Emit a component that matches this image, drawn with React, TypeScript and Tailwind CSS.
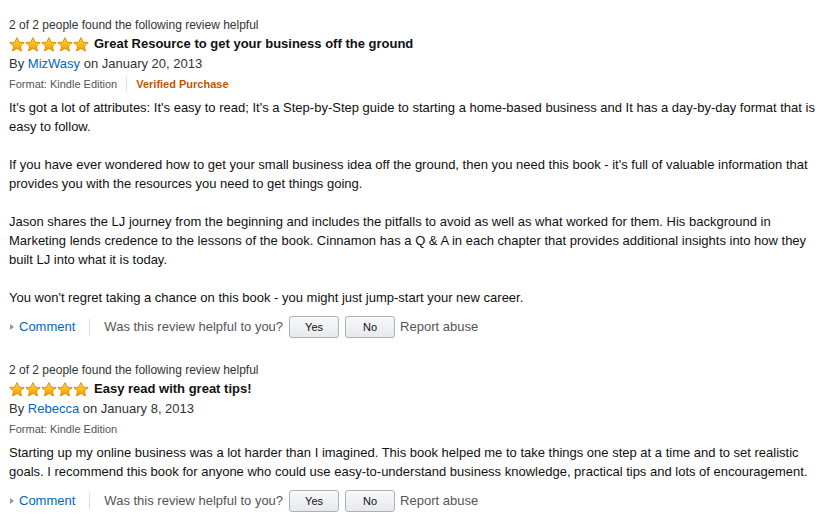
import React from "react";

const Star = () => (
  <svg width="16" height="15" viewBox="0 0 16 15" className="block">
    <defs>
      <linearGradient id="sg" x1="0" y1="0" x2="0" y2="1">
        <stop offset="0" stopColor="#ffd75a" />
        <stop offset="0.55" stopColor="#ffb51a" />
        <stop offset="1" stopColor="#f59b00" />
      </linearGradient>
    </defs>
    <path
      d="M8 0.6 L10.2 5.1 L15.2 5.6 L11.4 9 L12.5 14 L8 11.5 L3.5 14 L4.6 9 L0.8 5.6 L5.8 5.1 Z"
      fill="url(#sg)"
      stroke="#d98a00"
      strokeWidth="0.9"
      strokeLinejoin="round"
    />
  </svg>
);

const Stars = () => (
  <div className="flex">
    {[0, 1, 2, 3, 4].map((i) => (
      <Star key={i} />
    ))}
  </div>
);

const Btn = ({ label }: { label: string }) => (
  <button className="h-[22px] w-[50px] rounded-[3px] border border-[#adb1b8] bg-gradient-to-b from-[#f7f8fa] to-[#e7e9ec] text-[11px] leading-[20px] text-[#111] shadow-[0_1px_0_rgba(255,255,255,0.6)_inset]">
    {label}
  </button>
);

const Actions = () => (
  <div className="flex h-[22px] items-center text-[13px] text-[#555]">
    <span className="ml-[1px] mr-[5px] inline-block h-0 w-0 border-y-[3.5px] border-l-[4px] border-y-transparent border-l-[#999]" />
    <span className="text-[#0066c0]">Comment</span>
    <span className="mx-[14px] h-[16px] w-px bg-[#ddd]" />
    <span>Was this review helpful to you?</span>
    <span className="ml-[6px]"><Btn label="Yes" /></span>
    <span className="ml-[6px]"><Btn label="No" /></span>
    <span className="ml-[5px]">Report abuse</span>
  </div>
);

type Review = {
  title: string;
  author: string;
  date: string;
  verified: boolean;
  paragraphs: string[];
};

const reviews: Review[] = [
  {
    title: "Great Resource to get your business off the ground",
    author: "MizWasy",
    date: "January 20, 2013",
    verified: true,
    paragraphs: [
      "It's got a lot of attributes: It's easy to read; It's a Step-by-Step guide to starting a home-based business and It has a day-by-day format that is easy to follow.",
      "If you have ever wondered how to get your small business idea off the ground, then you need this book - it's full of valuable information that provides you with the resources you need to get things going.",
      "Jason shares the LJ journey from the beginning and includes the pitfalls to avoid as well as what worked for them. His background in Marketing lends credence to the lessons of the book. Cinnamon has a Q & A in each chapter that provides additional insights into how they built LJ into what it is today.",
      "You won't regret taking a chance on this book - you might just jump-start your new career.",
    ],
  },
  {
    title: "Easy read with great tips!",
    author: "Rebecca",
    date: "January 8, 2013",
    verified: false,
    paragraphs: [
      "Starting up my online business was a lot harder than I imagined. This book helped me to take things one step at a time and to set realistic goals. I recommend this book for anyone who could use easy-to-understand business knowledge, practical tips and lots of encouragement.",
    ],
  },
];

const ReviewBlock = ({ r }: { r: Review }) => (
  <div className="flex flex-col">
    <div className="h-[20px] pt-[2px] text-[12px] leading-[18px] text-[#333]">
      2 of 2 people found the following review helpful
    </div>
    <div className="flex h-[20px] items-center">
      <Stars />
      <span className="ml-[5px] text-[13px] font-bold leading-[20px] text-[#111]">
        {r.title}
      </span>
    </div>
    <div className="h-[20px] text-[13px] leading-[20px] text-[#333]">
      By <span className="text-[#0066c0]">{r.author}</span> on {r.date}
    </div>
    <div className="flex h-[20px] items-center text-[11px] text-[#555]">
      <span>Format: Kindle Edition</span>
      {r.verified && (
        <>
          <span className="mx-[9px] h-[14px] w-px bg-[#ddd]" />
          <span className="font-bold text-[#c45500]">Verified Purchase</span>
        </>
      )}
    </div>
    <div className="mt-[4px] flex flex-col gap-[19px] text-[13px] leading-[19px] text-[#111]">
      {r.paragraphs.map((p, i) => (
        <p key={i}>{p}</p>
      ))}
    </div>
    <div className="mt-[9px]">
      <Actions />
    </div>
  </div>
);

export default function App() {
  return (
    <div
      className="min-h-[528px] w-[829px] bg-white pl-[9px] pr-[8px] pt-[14px]"
      style={{ fontFamily: '"Liberation Sans", Arial, sans-serif' }}
    >
      <div className="flex flex-col gap-[21px]">
        {reviews.map((r, i) => (
          <ReviewBlock key={i} r={r} />
        ))}
      </div>
    </div>
  );
}
